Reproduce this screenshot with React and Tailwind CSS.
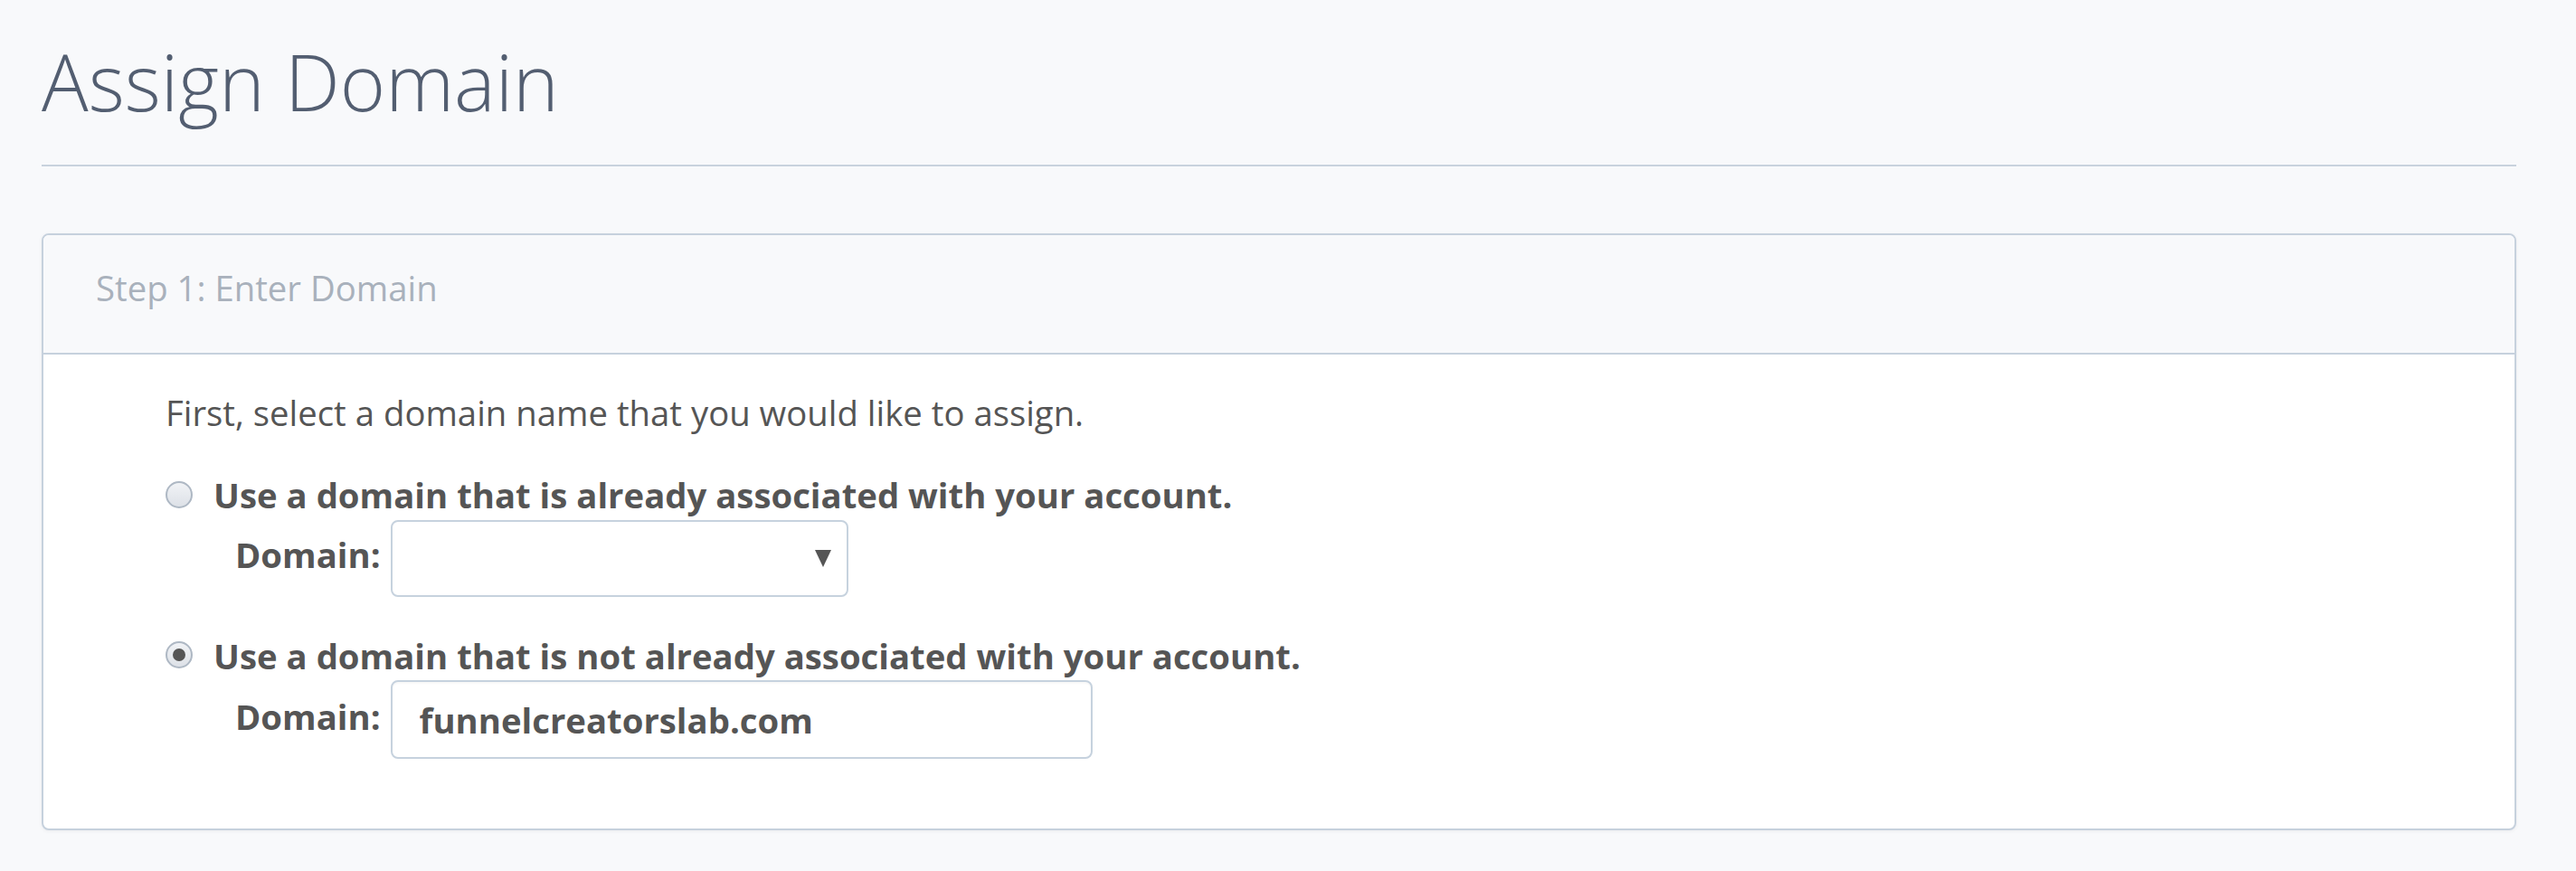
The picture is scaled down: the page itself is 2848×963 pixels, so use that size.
import React, { useState } from 'react';

function Radio({ checked, onClick, className }) {
  return (
    <button
      type="button"
      onClick={onClick}
      className={`flex h-[30px] w-[30px] shrink-0 items-center justify-center rounded-full border-2 border-[#aeb8c4] bg-gradient-to-b from-[#f1f3f6] to-[#dde1e7] ${className}`}
    >
      {checked && <span className="h-[14px] w-[14px] rounded-full bg-[#555]" />}
    </button>
  );
}

export default function App() {
  const [choice, setChoice] = useState('new');
  const [domain, setDomain] = useState('funnelcreatorslab.com');

  return (
    <div className="min-h-screen bg-[#f8f9fb] pt-[31px] font-['Open_Sans',sans-serif]">
      <div className="ml-[46px] w-[2736px]">
        <h1 className="text-[86px] font-light leading-[117px] text-[#535e71]">Assign Domain</h1>
        <div className="mt-[34px] border-t-2 border-[#c8d2dd]" />

        {/* Step card */}
        <div className="mt-[74px] overflow-hidden rounded-[8px] border-2 border-[#c6d1dd] bg-white shadow-[0_1px_4px_rgba(0,0,0,0.06)]">
          <div className="border-b-2 border-[#c6d1dd] bg-[#f8f9fb] pb-[46px] pl-[58px] pt-[32px] text-[38.3px] leading-[52px] text-[#a9b1bc]">
            Step 1: Enter Domain
          </div>

          <div className="pb-[77px] pl-[135px] pt-[38px] text-[38.3px] leading-[52px] text-[#555]">
            <p>First, select a domain name that you would like to assign.</p>

            <div className="mt-[39px] flex items-start gap-[23px]">
              <Radio className="mt-[11px]" checked={choice === 'existing'} onClick={() => setChoice('existing')} />
              <span className="font-bold">Use a domain that is already associated with your account.</span>
            </div>
            <div className="ml-[77px] mt-[2px] flex items-start gap-[11px]">
              <span className="mt-[12px] font-bold">Domain:</span>
              <div className="flex h-[85px] w-[506px] items-center justify-end rounded-[8px] border-2 border-[#c6d2de] bg-white pr-[17px]">
                <svg width="18" height="19" viewBox="0 0 18 19">
                  <polygon points="0,0 18,0 9,19" fill="#555" />
                </svg>
              </div>
            </div>

            <div className="mt-[39px] flex items-start gap-[23px]">
              <Radio className="mt-[10px]" checked={choice === 'new'} onClick={() => setChoice('new')} />
              <span className="font-bold">Use a domain that is not already associated with your account.</span>
            </div>
            <div className="ml-[77px] mt-[1px] flex items-start gap-[11px]">
              <span className="mt-[14px] font-bold">Domain:</span>
              <input
                type="text"
                value={domain}
                onChange={(e) => setDomain(e.target.value)}
                className="h-[87px] w-[776px] rounded-[8px] border-2 border-[#c6d2de] bg-white px-[30px] text-[38.3px] font-bold text-[#555] shadow-[inset_0_2px_2px_rgba(0,0,0,0.03)] outline-none"
              />
            </div>
          </div>
        </div>
      </div>
    </div>
  );
}
